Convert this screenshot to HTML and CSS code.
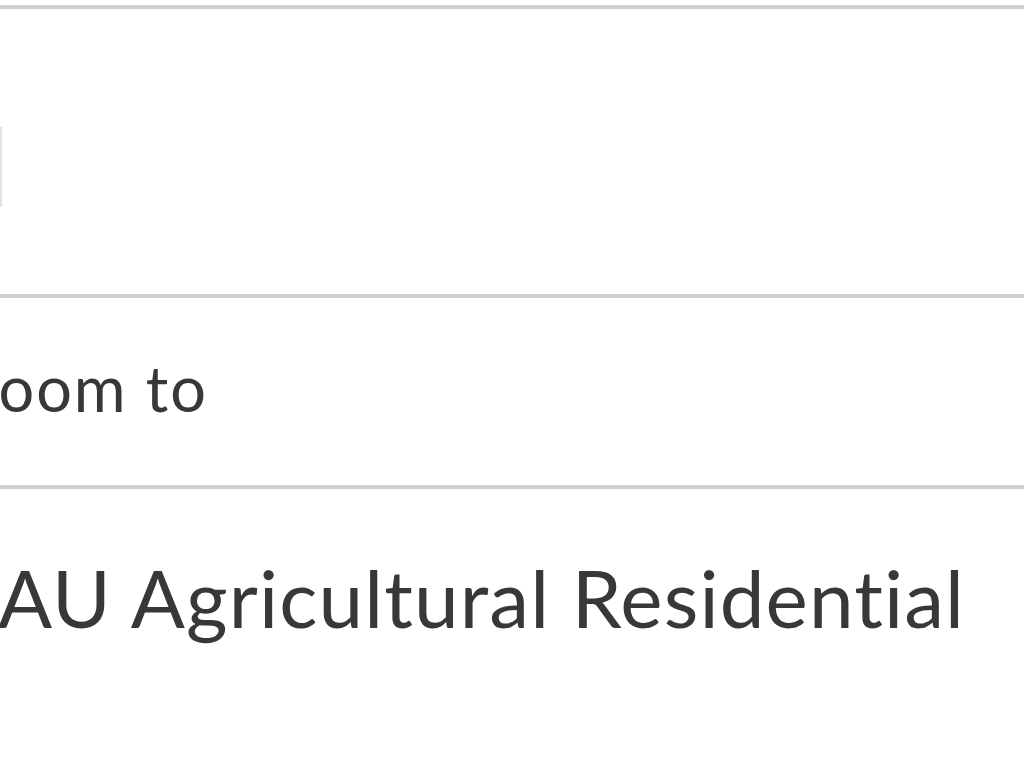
FILE: index.html
```html
<!DOCTYPE html>
<html>
<head>
<meta charset="utf-8">
<link rel="stylesheet" href="styles.css">
</head>
<body>
<div class="panel">
  <div class="row row-top">
    <div class="edge"></div>
  </div>
  <div class="row row-action">
    <span class="action">Zoom to</span>
  </div>
  <div class="row row-title">
    <span class="title">AU Agricultural Residential</span>
  </div>
</div>
</body>
</html>
```

FILE: styles.css
```css
html, body {
  margin: 0;
  padding: 0;
  background: #ffffff;
  width: 1024px;
  height: 768px;
  overflow: hidden;
}
.panel {
  padding-top: 5px;
  font-family: Lato, "Open Sans", sans-serif;
  font-variant-ligatures: none;
  color: #383838;
}
.row {
  border-top: 4px solid #cfcfcf;
  white-space: nowrap;
  box-sizing: border-box;
}
.row-top {
  height: 289px;
  padding-top: 118px;
}
.edge {
  width: 2px;
  height: 80px;
  background: #e2e2e2;
}
.row-action {
  height: 191px;
  padding-top: 58px;
  font-size: 63px;
  line-height: 1;
}
.action {
  display: inline-block;
  margin-left: -40px;
  letter-spacing: 2px;
}
.row-title {
  padding-top: 68px;
  font-size: 80px;
  line-height: 1;
}
.title {
  display: inline-block;
  margin-left: -2px;
  letter-spacing: 1.1px;
}
```
